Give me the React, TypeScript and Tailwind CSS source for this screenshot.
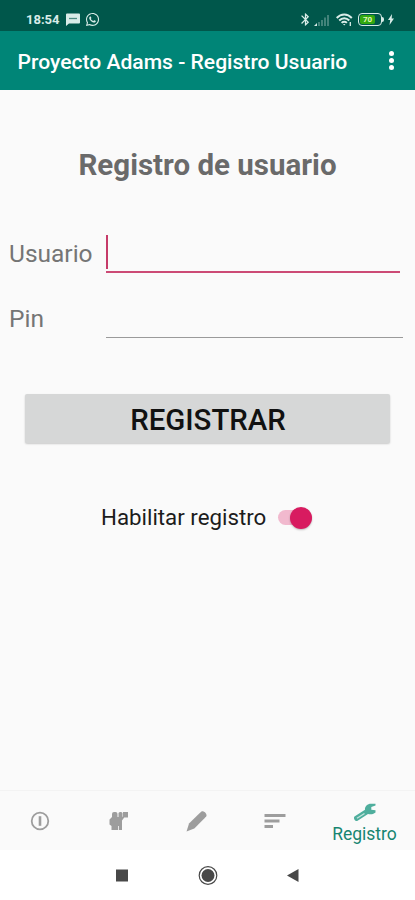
import { useState } from 'react';
import { FaWhatsapp } from 'react-icons/fa';
import { MdBluetooth } from 'react-icons/md';

function StatusBar() {
  return (
    <div className="flex h-[31px] items-center bg-[#00574b] pt-2 pr-[21px] pl-[26px] text-[#d9ece8]">
      <span className="w-[34px] text-[13px] leading-none font-bold whitespace-nowrap">18:54</span>
      <svg className="ml-[6px]" width="14" height="13" viewBox="0 0 14 13" fill="currentColor">
        <path d="M1 0.5h12a1 1 0 0 1 1 1v8a1 1 0 0 1-1 1H3L0 13V1.500a1 1 0 0 1 1-1z" />
        <path d="M3 5.500h8" stroke="#4d8b82" strokeWidth="1.300" />
      </svg>
      <FaWhatsapp className="ml-[5px]" size={15} />
      <div className="ml-auto flex items-center">
        <MdBluetooth size={15} />
        <svg className="ml-[1px]" width="16" height="12" viewBox="0 0 16 12" fill="currentColor">
          <path d="M0 12l3-3v3z" />
          <path d="M4 8h2v4H4zM7 6h2v6H7zM10 3.500h2V12h-2zM13 1h2v11h-2z" opacity="0.300" />
        </svg>
        <svg className="ml-[6px]" width="17" height="14" viewBox="0 0 17 14" fill="none" stroke="currentColor" strokeWidth="1.900">
          <path d="M0.700 5C5 0.300 11.500 0.300 15.800 5" />
          <path d="M3.200 7.500c3-3.100 7.100-3.100 10.100 0" />
          <path d="M5.600 9.900c1.600-1.600 3.700-1.600 5.300 0" />
          <path d="M7 11h2.500L8.200 12.600z" fill="currentColor" stroke="none" />
          <path d="M14.300 9v4" strokeWidth="1.300" />
        </svg>
        <div className="ml-[5px] flex h-[13px] w-[24px] items-center rounded-[4px] border-[1.5px] border-[#d9ece8] p-px">
          <div className="flex h-full w-[15px] items-center justify-center rounded-[2px] bg-[#32a810]">
            <span className="text-[8px] leading-none font-bold text-[#e4f7bc]">70</span>
          </div>
        </div>
        <div className="h-[5px] w-[2px] rounded-r-sm bg-[#d9ece8]" />
        <svg className="ml-[4px]" width="6" height="11" viewBox="0 0 6 11" fill="currentColor">
          <path d="M4 0L0 6h2.200L1.500 11L6 4.600H3.700z" />
        </svg>
      </div>
    </div>
  );
}

function AppBar() {
  return (
    <header className="flex h-[59px] items-center justify-between bg-[#008577] pr-[21px] pl-[17.5px] text-white">
      <h1 className="pt-[3px] text-[21.1px] font-medium whitespace-nowrap">Proyecto Adams - Registro Usuario</h1>
      <button className="flex flex-col gap-[2px]" aria-label="Menu">
        <span className="size-[5px] rounded-full bg-white" />
        <span className="size-[5px] rounded-full bg-white" />
        <span className="size-[5px] rounded-full bg-white" />
      </button>
    </header>
  );
}

function BottomNav() {
  return (
    <nav className="flex h-[60px] border-t border-[#f3f3f3] bg-[#fafafa] text-[#9d9d9d]">
      <div className="flex w-[79px] items-center justify-center">
        <svg width="20" height="20" viewBox="0 0 20 20" fill="none" stroke="currentColor" strokeWidth="1.800">
          <circle cx="10" cy="10" r="8.300" />
          <path d="M10 5.200v9.600" strokeWidth="2.600" />
        </svg>
      </div>
      <div className="flex w-[79px] items-center justify-center">
        <svg width="20" height="20" viewBox="0 0 20 20" fill="currentColor">
          <rect x="3" y="1" width="5.500" height="7" rx="2" />
          <rect x="9.500" y="1" width="4" height="6" rx="1.500" />
          <path d="M3 6h10v13H9.800v-4h-0.800v4H2.500v-4L0.500 13.500V8.500z" />
          <path d="M12 6.500l2-1V1h5v5.500h-3.800L13 9.500z" />
        </svg>
      </div>
      <div className="flex w-[77px] items-center justify-center">
        <svg width="22" height="22" viewBox="0 0 22 22" fill="currentColor">
          <path d="M0.500 21.500l2.500-8L13.500 3.300l2-1.800c1.800-1.600 6.200 2.500 4.800 4.700L18.500 8.300L8.300 18.500z" />
        </svg>
      </div>
      <div className="flex w-[79px] items-center justify-center">
        <svg width="22" height="16" viewBox="0 0 22 16" fill="currentColor">
          <path d="M0.500 1h21v3h-21zM0.500 6.500h15v3h-15zM0.500 12H9v3H0.500z" />
        </svg>
      </div>
      <div className="flex flex-1 flex-col items-center pt-[12px]">
        <svg width="24" height="19" viewBox="0 0 24 19">
          <path
            d="M1.500 13.500L12 6.800C11.500 3.500 14.500 0.800 18 0.800h4.500v1.700L18.300 4v2.700l4.200 0.500V9.500c-2.500 2-5 2.200-7.500 1.500L4.200 18C2 18.700 0 15 1.500 13.500z"
            fill="#4fae9d"
          />
          <path d="M4 15.200l7.500-4.700" stroke="#c5e5de" strokeWidth="1.300" />
        </svg>
        <span className="text-[17.500px] leading-[24px] text-[#168571]">Registro</span>
      </div>
    </nav>
  );
}

function SystemNav() {
  return (
    <div className="flex h-[50px] items-center bg-white pl-[100px] text-[#484848]">
      <svg width="200" height="24" viewBox="0 0 200 24" fill="currentColor">
        <path d="M16 6.500h12v12H16z" />
        <circle cx="108" cy="12.500" r="6.500" />
        <circle cx="108" cy="12.500" r="8.800" fill="none" stroke="currentColor" strokeWidth="1.200" />
        <path d="M187 12.500l11.500-6.500v13z" />
      </svg>
    </div>
  );
}

export default function App() {
  const [enabled, setEnabled] = useState(true);
  const [user, setUser] = useState('');
  const [pin, setPin] = useState('');

  return (
    <div className="flex h-[900px] w-[415px] flex-col overflow-hidden bg-[#fafafa] font-['Roboto',sans-serif]">
      <StatusBar />
      <AppBar />

      <main className="flex flex-1 flex-col">
        <h2 className="mt-[56px] text-center text-[29.5px] leading-[38px] font-bold text-[#6a6a6a]">
          Registro de usuario
        </h2>

        <div className="mt-[51px] flex h-[38px] pl-[9px]">
          <label className="w-[97px] pt-[4px] text-[24.5px] leading-[30px] text-[#757575]">Usuario</label>
          <div className="flex w-[294px] border-b-2 border-[#cc4a75]">
            <span className="h-[34px] w-[2px] bg-[#c63b69]" />
            <input className="w-full outline-none" value={user} onChange={(e) => setUser(e.target.value)} />
          </div>
        </div>

        <div className="mt-[27px] flex h-[38px] pl-[9px]">
          <label className="w-[97px] pt-[4px] text-[24.5px] leading-[30px] text-[#757575]">Pin</label>
          <input
            type="password"
            className="w-[297px] border-b border-[#9a9a9a] outline-none"
            value={pin}
            onChange={(e) => setPin(e.target.value)}
          />
        </div>

        <button className="mx-[25px] mt-[56px] h-[49px] rounded-[2px] bg-[#d6d7d7] pt-[3px] pl-px text-[29.4px] font-medium text-[#111] shadow-[0_1px_2px_rgba(0,0,0,0.2)]">
          REGISTRAR
        </button>

        <div className="mt-[57px] flex items-center pl-[101px]">
          <span className="w-[177px] text-[22.300px] leading-[35px] whitespace-nowrap text-[#1c1c1c]">
            Habilitar registro
          </span>
          <button
            role="switch"
            aria-checked={enabled}
            aria-label="Habilitar registro"
            onClick={() => setEnabled(!enabled)}
            className={`flex h-[15px] w-[34px] items-center rounded-full bg-[#f1b9ce] ${enabled ? 'justify-end' : 'justify-start'}`}
          >
            <span className="size-[22px] shrink-0 rounded-full bg-[#d81b60] shadow-[0_1px_2px_rgba(0,0,0,0.25)]" />
          </button>
        </div>
      </main>

      <BottomNav />
      <SystemNav />
    </div>
  );
}
